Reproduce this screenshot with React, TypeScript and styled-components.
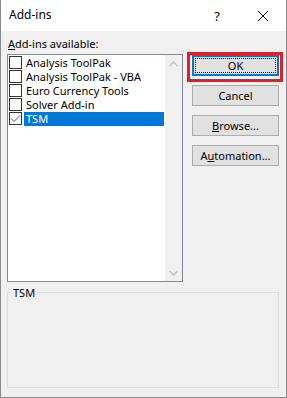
import React from 'react';
import styled, { createGlobalStyle } from 'styled-components';

const Global = createGlobalStyle`
  html, body { margin: 0; padding: 0; background: #f0f0f0; }
  body {
    font-family: "Noto Sans", "Open Sans", sans-serif;
    font-size: 11px;
    color: #000;
  }
  * { box-sizing: border-box; }
`;

const Window = styled.div`
  width: 287px;
  height: 398px;
  background: #f0f0f0;
  border: 1px solid #8a8a8a;
  border-top: none;
  display: flex;
  flex-direction: column;
`;

const TitleBar = styled.div`
  height: 31px;
  background: #fff;
  display: flex;
  align-items: center;
  flex: none;
`;

const Title = styled.div`
  flex: 1;
  padding-left: 8px;
  font-size: 12px;
  line-height: 16px;
  padding-bottom: 1px;
`;

const CaptionButton = styled.div`
  width: 46px;
  height: 31px;
  display: flex;
  align-items: center;
  justify-content: center;
  font-size: 13px;
`;

const Body = styled.div`
  padding: 5px 6px 0 6px;
  display: flex;
  flex-direction: column;
`;

const TopRow = styled.div`
  display: grid;
  grid-template-columns: 176px 87px;
  column-gap: 9px;
`;

const LeftCol = styled.div`
  display: flex;
  flex-direction: column;
`;

const Label = styled.div`
  line-height: 15px;
  height: 15px;
  padding-left: 1px;
  margin-bottom: 3px;
`;

const ListBox = styled.div`
  height: 228px;
  border: 1px solid #828790;
  background: #fff;
  display: flex;
`;

const Items = styled.div`
  flex: 1;
  padding: 1px 1px 0 1px;
  display: flex;
  flex-direction: column;
`;

const Row = styled.div`
  height: 14px;
  display: flex;
  align-items: flex-start;
  gap: 2px;
`;

const Box = styled.div`
  width: 13px;
  height: 13px;
  flex: none;
  border: 1px solid #333;
  background: #fff;
  display: flex;
  align-items: center;
  justify-content: center;
`;

const ItemText = styled.div<{ $selected?: boolean }>`
  flex: 1;
  height: 14px;
  line-height: 14px;
  padding-left: 2px;
  white-space: nowrap;
  background: ${(p) => (p.$selected ? '#0078d7' : 'transparent')};
  color: ${(p) => (p.$selected ? '#fff' : '#000')};
`;

const ScrollBar = styled.div`
  width: 17px;
  flex: none;
  background: #f0f0f0;
  display: flex;
  flex-direction: column;
  justify-content: space-between;
`;

const ScrollButton = styled.div`
  width: 17px;
  height: 17px;
  display: flex;
  align-items: center;
  justify-content: center;
`;

const RightCol = styled.div`
  padding-top: 19px;
  display: flex;
  flex-direction: column;
  gap: 9px;
`;

const ButtonWrap = styled.div`
  position: relative;
`;

const Button = styled.div<{ $default?: boolean }>`
  width: 87px;
  height: 21px;
  background: #e1e1e1;
  border: ${(p) => (p.$default ? '2px solid #0078d7' : '1px solid #adadad')};
  display: flex;
  align-items: center;
  justify-content: center;
  line-height: 15px;
  padding-bottom: 1px;
  outline: ${(p) => (p.$default ? '1px dotted #000' : 'none')};
  outline-offset: -4px;
`;

const Annotation = styled.div`
  position: absolute;
  left: -5px;
  top: -3px;
  right: -4px;
  bottom: -6px;
  border: 3px solid #e41e26;
  pointer-events: none;
`;

const GroupBox = styled.div`
  position: relative;
  margin-top: 10px;
  width: 272px;
  height: 96px;
  border: 1px solid #dcdcdc;
`;

const Legend = styled.div`
  position: absolute;
  left: 4px;
  top: -8px;
  padding: 0 1px;
  line-height: 15px;
  background: #f0f0f0;
`;

const items = [
  { name: 'Analysis ToolPak', checked: false },
  { name: 'Analysis ToolPak - VBA', checked: false },
  { name: 'Euro Currency Tools', checked: false },
  { name: 'Solver Add-in', checked: false },
  { name: 'TSM', checked: true, selected: true },
];

const Check = () => (
  <svg width="11" height="11" viewBox="0 0 11 11">
    <path d="M1 5.5 L4 8.5 L10 2.5" fill="none" stroke="#555" strokeWidth="1" />
  </svg>
);

const Chevron = ({ up }: { up?: boolean }) => (
  <svg width="9" height="6" viewBox="0 0 9 6">
    <path
      d={up ? 'M0.5 5 L4.5 1 L8.5 5' : 'M0.5 1 L4.5 5 L8.5 1'}
      fill="none"
      stroke="#c2c2c2"
      strokeWidth="1.5"
    />
  </svg>
);

export default function App() {
  return (
    <>
      <Global />
      <Window>
        <TitleBar>
          <Title>Add-ins</Title>
          <CaptionButton>?</CaptionButton>
          <CaptionButton>
            <svg width="10" height="10" viewBox="0 0 10 10">
              <path d="M0 0 L10 10 M10 0 L0 10" stroke="#000" strokeWidth="1" />
            </svg>
          </CaptionButton>
        </TitleBar>
        <Body>
          <TopRow>
            <LeftCol>
              <Label>
                <u>A</u>dd-ins available:
              </Label>
              <ListBox>
                <Items>
                  {items.map((it) => (
                    <Row key={it.name}>
                      <Box>{it.checked && <Check />}</Box>
                      <ItemText $selected={it.selected}>{it.name}</ItemText>
                    </Row>
                  ))}
                </Items>
                <ScrollBar>
                  <ScrollButton>
                    <Chevron up />
                  </ScrollButton>
                  <ScrollButton>
                    <Chevron />
                  </ScrollButton>
                </ScrollBar>
              </ListBox>
            </LeftCol>
            <RightCol>
              <ButtonWrap>
                <Button $default>OK</Button>
                <Annotation />
              </ButtonWrap>
              <Button>Cancel</Button>
              <Button>
                <u>B</u>rowse...
              </Button>
              <Button>
                A<u>u</u>tomation...
              </Button>
            </RightCol>
          </TopRow>
          <GroupBox>
            <Legend>TSM</Legend>
          </GroupBox>
        </Body>
      </Window>
    </>
  );
}
